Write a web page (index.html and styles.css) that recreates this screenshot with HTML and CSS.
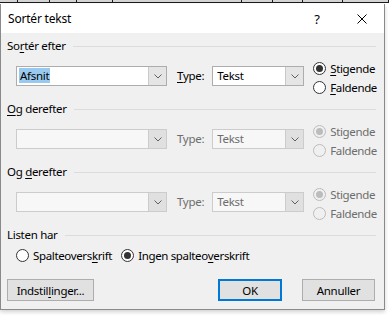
FILE: index.html
```html
<!DOCTYPE html>
<html lang="da">
<head>
<meta charset="utf-8">
<title>Sortér tekst</title>
<link rel="stylesheet" href="styles.css">
</head>
<body>
<div class="doc">
  <span class="cell" style="width:18px"></span><span class="cell" style="width:32px"></span><span class="cell" style="width:27px"></span><span class="cell" style="width:36px"></span><span class="cell" style="width:129px"></span><span class="cell" style="width:31px"></span><span class="cell" style="width:30px"></span><span class="cell" style="width:40px"></span><span class="cell" style="width:46px"></span>
</div>
<div class="dialog">
  <div class="titlebar">
    <span class="title">Sortér tekst</span>
    <span class="help">?</span>
    <svg class="close" width="10" height="10" viewBox="0 0 10 10"><path d="M0.5 0.5L9.5 9.5M9.5 0.5L0.5 9.5" stroke="#000" stroke-width="1"/></svg>
  </div>
  <div class="content">
    <section class="group">
      <div class="legend"><span>So<u>r</u>tér efter</span><i class="rule"></i></div>
      <div class="row">
        <div class="combo"><span class="val"><span class="sel">Afsnit</span></span><span class="btn"><svg width="8" height="5" viewBox="0 0 8 5"><path d="M0.5 0.5L4 4L7.5 0.5" fill="none" stroke="#606060"/></svg></span></div>
        <span class="typelbl"><u>T</u>ype:</span>
        <div class="combo type"><span class="val">Tekst</span><span class="btn"><svg width="8" height="5" viewBox="0 0 8 5"><path d="M0.5 0.5L4 4L7.5 0.5" fill="none" stroke="#606060"/></svg></span></div>
        <div class="radios">
          <label class="radio"><span class="dot on"></span><u>S</u>tigende</label>
          <label class="radio"><span class="dot"></span><u>F</u>aldende</label>
        </div>
      </div>
    </section>
    <section class="group">
      <div class="legend"><span><u>O</u>g derefter</span><i class="rule"></i></div>
      <div class="row dis">
        <div class="combo"><span class="val"></span><span class="btn"><svg width="8" height="5" viewBox="0 0 8 5"><path d="M0.5 0.5L4 4L7.5 0.5" fill="none" stroke="#606060"/></svg></span></div>
        <span class="typelbl">Type:</span>
        <div class="combo type"><span class="val">Tekst</span><span class="btn"><svg width="8" height="5" viewBox="0 0 8 5"><path d="M0.5 0.5L4 4L7.5 0.5" fill="none" stroke="#606060"/></svg></span></div>
        <div class="radios">
          <label class="radio"><span class="dot on"></span>Stigende</label>
          <label class="radio"><span class="dot"></span>Faldende</label>
        </div>
      </div>
    </section>
    <section class="group">
      <div class="legend"><span>Og <u>d</u>erefter</span><i class="rule"></i></div>
      <div class="row dis">
        <div class="combo"><span class="val"></span><span class="btn"><svg width="8" height="5" viewBox="0 0 8 5"><path d="M0.5 0.5L4 4L7.5 0.5" fill="none" stroke="#606060"/></svg></span></div>
        <span class="typelbl">Type:</span>
        <div class="combo type"><span class="val">Tekst</span><span class="btn"><svg width="8" height="5" viewBox="0 0 8 5"><path d="M0.5 0.5L4 4L7.5 0.5" fill="none" stroke="#606060"/></svg></span></div>
        <div class="radios">
          <label class="radio"><span class="dot on"></span>Stigende</label>
          <label class="radio"><span class="dot"></span>Faldende</label>
        </div>
      </div>
    </section>
    <section class="group last">
      <div class="legend"><span>Listen har</span><i class="rule"></i></div>
      <div class="hrow">
        <label class="radio"><span class="dot"></span>Spalteovers<u>k</u>rift</label>
        <label class="radio"><span class="dot on"></span>Ingen spalteo<u>v</u>erskrift</label>
      </div>
    </section>
    <div class="buttons">
      <button class="b opts">Indstil<u>l</u>inger...</button>
      <span class="spacer"></span>
      <button class="b ok">OK</button>
      <button class="b cancel">Annuller</button>
    </div>
  </div>
</div>
</body>
</html>
```
FILE: styles.css
```css
* { box-sizing: border-box; }
html, body { margin: 0; padding: 0; }
body {
  width: 389px;
  height: 315px;
  overflow: hidden;
  background: #ffffff;
  font-family: "Noto Sans", "Open Sans", sans-serif;
  font-size: 11.5px;
  color: #000;
}
u { text-decoration: underline; text-underline-offset: 2px; }
.doc {
  height: 4px;
  display: flex;
  background: #fff;
  overflow: hidden;
}
.cell {
  height: 3px;
  background: #d4d4d4;
  border-bottom: 1px solid #1a1a1a;
  border-right: 1px solid #1a1a1a;
}
.dialog {
  width: 385px;
  border: 1px solid #8a8a8a;
  border-top: none;
  background: #f0f0f0;
  box-shadow: 0 2px 4px rgba(0,0,0,0.18);
}
.titlebar {
  height: 29px;
  background: #fff;
  display: flex;
  align-items: center;
  padding-left: 7px;
}
.title { flex: 1; letter-spacing: -0.2px; font-size: 12px; }
.help { margin-right: 37px; font-size: 13px; }
.close { margin-right: 17px; }
.content {
  padding: 6px 6px 8px 6px;
}
.legend {
  display: flex;
  align-items: center;
  height: 14px;
  line-height: 14px;
  padding-right: 2px;
}
.legend span { letter-spacing: -0.3px; }
.rule {
  flex: 1;
  height: 1px;
  background: #dcdcdc;
  margin-left: 7px;
}
.group { margin-bottom: 5px; }
.row {
  display: flex;
  align-items: flex-start;
  padding-left: 9px;
  margin-top: 6px;
  height: 38px;
}
.combo {
  margin-top: 7px;
  width: 151px;
  height: 20px;
  border: 1px solid #adadad;
  background: #fff;
  display: flex;
}
.combo .val {
  flex: 1;
  padding-left: 2px;
  line-height: 18px;
  letter-spacing: -0.3px;
}
.sel { background: #99c9ef; display: inline-block; line-height: 15px; padding: 0 1px; }
.combo .btn {
  width: 18px;
  height: 18px;
  background: #e5e5e5;
  border-left: 1px solid #c9c9c9;
  display: flex;
  align-items: center;
  justify-content: center;
}
.combo.type { width: 92px; margin-left: 8px; }
.combo.type .val { padding-left: 4px; }
.typelbl {
  margin-left: 10px;
  margin-top: 7px;
  line-height: 20px;
  letter-spacing: -0.3px;
}
.radios {
  margin-left: 9px;
  display: flex;
  flex-direction: column;
}
.radio {
  display: flex;
  align-items: center;
  height: 19px;
  letter-spacing: -0.35px;
}
.dot {
  width: 13px;
  height: 13px;
  border-radius: 50%;
  border: 1px solid #333;
  background: #fff;
  margin-right: 4px;
  display: flex;
  align-items: center;
  justify-content: center;
}
.dot.on::after {
  content: "";
  width: 7px;
  height: 7px;
  border-radius: 50%;
  background: #333;
}
.dis { color: #6d6d6d; }
.dis .combo { border-color: #cccccc; background: #f7f7f7; }
.dis .combo .btn { background: #e0e0e0; border-left-color: #cccccc; }
.dis .radio { color: #6d6d6d; }
.dis .dot { border-color: #bcbcbc; background: #f0f0f0; }
.dis .dot.on::after { background: #bcbcbc; }
.hrow {
  display: flex;
  margin-top: 6px;
  padding-left: 9px;
  height: 14px;
  gap: 9px;
}
.hrow .radio { height: 14px; }
.group.last { margin-bottom: 0; }
.buttons {
  display: flex;
  margin-top: 17px;
  height: 22px;
}
.spacer { flex: 1; }
.b {
  height: 22px;
  font-family: inherit;
  font-size: 11.5px;
  background: #e1e1e1;
  border: 1px solid #adadad;
  padding: 0;
  color: #000;
  letter-spacing: -0.3px;
}
.opts { width: 87px; }
.ok { width: 64px; border: 2px solid #0078d7; margin-right: 20px; }
.cancel { width: 73px; margin-right: 3px; }
```
